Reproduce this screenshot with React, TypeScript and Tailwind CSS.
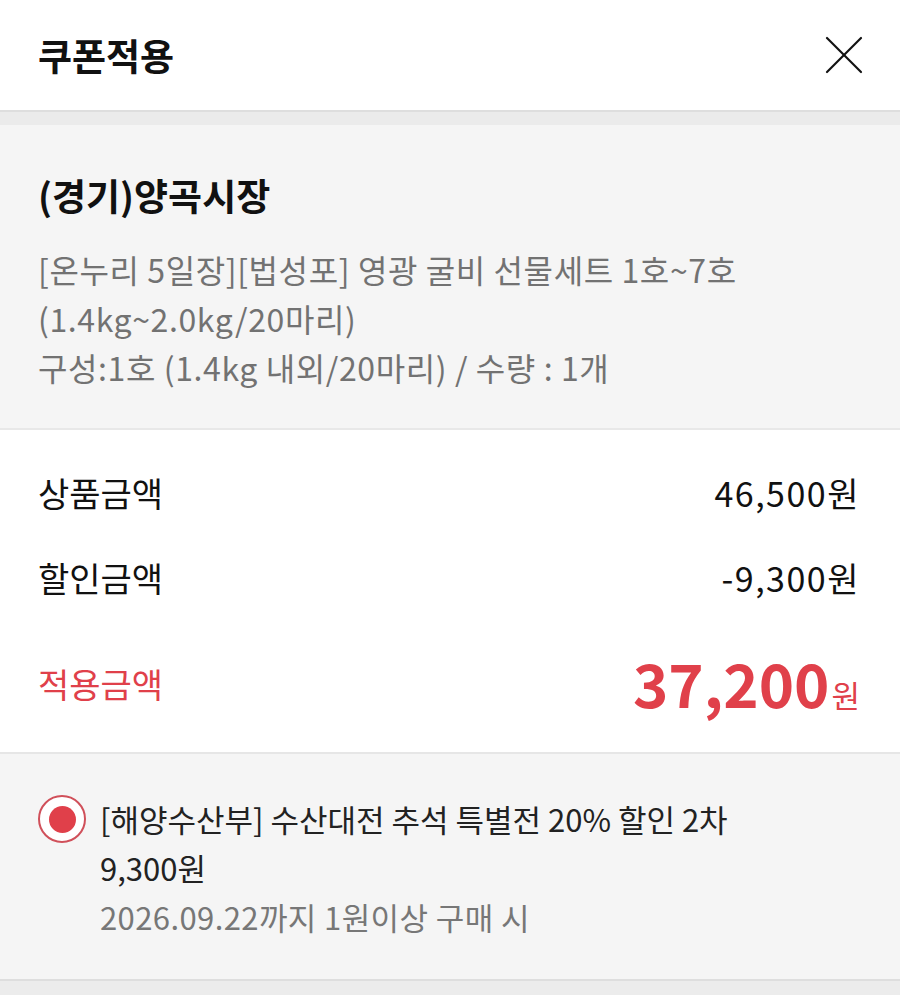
import { useState } from "react";

const font = { fontFamily: '"Noto Sans CJK KR", "Noto Sans", sans-serif' };

export default function App() {
  const [selected, setSelected] = useState(true);

  return (
    <div className="w-[900px] min-h-[995px] bg-[#ececec] text-[#111]" style={font}>
      {/* 헤더 */}
      <header className="h-[112px] bg-white flex items-center justify-between pl-[38px] pr-[36px] border-b-2 border-[#dedede]">
        <h1 className="text-[37px] font-bold leading-none">쿠폰적용</h1>
        <button className="w-[40px] h-[40px] flex items-center justify-center">
          <svg width="38" height="38" viewBox="0 0 38 38" fill="none" stroke="#111" strokeWidth="2.2" strokeLinecap="round">
            <path d="M2 2 L36 36" />
            <path d="M36 2 L2 36" />
          </svg>
        </button>
      </header>
      <div className="h-[13px] bg-[#ebebeb]" />

      {/* 상품 정보 */}
      <section className="bg-[#f5f5f5] pl-[38px] pr-[20px] pt-[46px] pb-[36px] border-b-2 border-[#e8e8e8]">
        <h2 className="text-[37px] font-bold leading-[48px]">(경기)양곡시장</h2>
        <div className="mt-[26px] text-[32px] leading-[49px] text-[#727272] tracking-[0.6px]">
          <p>[온누리 5일장][법성포] 영광 굴비 선물세트 1호~7호</p>
          <p>(1.4kg~2.0kg/20마리)</p>
          <p>구성:1호 (1.4kg 내외/20마리) / 수량 : 1개</p>
        </div>
      </section>

      {/* 금액 */}
      <section className="bg-white pl-[38px] pr-[40px] pt-[38px] pb-[31px] border-b-2 border-[#e6e6e6]">
        <div className="h-[48px] flex items-center justify-between text-[34px]">
          <span>상품금액</span>
          <span className="tracking-[1.5px]">46,500원</span>
        </div>
        <div className="mt-[37px] h-[48px] flex items-center justify-between text-[34px]">
          <span>할인금액</span>
          <span className="tracking-[1.5px]">-9,300원</span>
        </div>
        <div className="mt-[48px] h-[72px] flex items-center justify-between text-[#e0404a]">
          <span className="text-[34px] mt-[-4px]">적용금액</span>
          <span className="flex items-baseline">
            <span className="text-[60px] font-bold leading-none">37,200</span>
            <span className="text-[31px] ml-[2px]">원</span>
          </span>
        </div>
      </section>

      {/* 쿠폰 */}
      <section className="bg-[#f5f5f5] pl-[38px] pr-[20px] pt-[41px] pb-[38px] border-b-2 border-[#dedede]">
        <label className="flex gap-[14px] cursor-pointer" onClick={() => setSelected(!selected)}>
          <span className="w-[48px] h-[48px] shrink-0 rounded-full border-2 border-[#d0505a] bg-white flex items-center justify-center">
            {selected && <span className="w-[27px] h-[27px] rounded-full bg-[#e0404a]" />}
          </span>
          <div className="text-[31px] leading-[48px]">
            <p className="text-[#222]">[해양수산부] 수산대전 추석 특별전 20% 할인 2차</p>
            <p className="text-[#222] leading-[50px]">9,300원</p>
            <p className="text-[#777] tracking-[0.4px]">2026.09.22까지 1원이상 구매 시</p>
          </div>
        </label>
      </section>
    </div>
  );
}
